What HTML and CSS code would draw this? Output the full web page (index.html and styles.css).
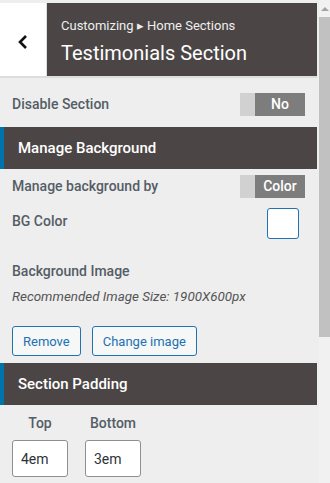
FILE: index.html
```html
<!DOCTYPE html>
<html lang="en">
  <head>
    <meta charset="UTF-8" />
    <meta name="viewport" content="width=device-width, initial-scale=1.0" />
    <title>Testimonials Section</title>
    <link rel="stylesheet" href="styles.css">
  </head>
  <body>
    <div class="layout">
      <div class="panel">
        <div class="head">
          <button class="back">
            <svg width="12" height="16" viewBox="0 0 12 16"><path d="M9 2 L3 8 L9 14" fill="none" stroke="#111" stroke-width="2.6"/></svg>
          </button>
          <div class="title">
            <span class="crumb">Customizing &#9656; Home Sections</span>
            <span class="name">Testimonials Section</span>
          </div>
        </div>

        <div class="row first">
          <span class="label">Disable Section</span>
          <span class="toggle"><i></i><b>No</b></span>
        </div>

        <div class="section">Manage Background</div>

        <div class="row tight">
          <span class="label">Manage background by</span>
          <span class="toggle"><i></i><b>Color</b></span>
        </div>
        <div class="row swatch-row">
          <span class="label">BG Color</span>
          <span class="swatch"></span>
        </div>

        <div class="image">
          <span class="label">Background Image</span>
          <em class="hint">Recommended Image Size: 1900X600px</em>
          <div class="actions">
            <button class="btn">Remove</button>
            <button class="btn">Change image</button>
          </div>
        </div>

        <div class="section">Section Padding</div>

        <div class="paddings">
          <div class="pad">
            <span class="label">Top</span>
            <input type="text" value="4em" />
          </div>
          <div class="pad">
            <span class="label">Bottom</span>
            <input type="text" value="3em" />
          </div>
        </div>
      </div>
      <div class="scrollbar">
        <div class="arrow"></div>
        <div class="thumb"></div>
      </div>
    </div>
  </body>
</html>
```

FILE: styles.css
```css
body {
  margin: 0;
  background-color: #eeeeee;
  font-family: Roboto, "Liberation Sans", sans-serif;
  color: #555d66;
}
.layout {
  display: flex;
  height: 483px;
  overflow: hidden;
}
.panel {
  width: 317px;
  flex-shrink: 0;
}
.head {
  display: flex;
  height: 73px;
  border-top: 3px solid #eeeeee;
  border-bottom: 2px solid #dddddd;
  background-color: #fff;
}
.back {
  width: 47px;
  border: none;
  border-right: 1px solid #dddddd;
  background-color: #fff;
  padding: 4px 0 0;
  display: flex;
  align-items: center;
  justify-content: center;
}
.title {
  flex: 1;
  background-color: #4b4645;
  color: #fff;
  padding: 13px 14px 0;
  display: flex;
  flex-direction: column;
}
.crumb {
  font-size: 13px;
  color: #eeeeee;
  line-height: 20px;
}
.name {
  font-size: 20px;
  line-height: 34px;
}
.label {
  font-size: 14px;
  font-weight: 500;
}
.row {
  display: flex;
  align-items: center;
  justify-content: space-between;
  padding: 0 12px;
}
.row.first {
  height: 26px;
  margin: 13px 0 10px;
}
.row.tight {
  height: 24px;
  margin: 5px 0 0;
}
.toggle {
  display: flex;
  width: 65px;
  height: 23px;
}
.toggle i {
  width: 15px;
  background-color: #d1d1d1;
}
.toggle b {
  flex: 1;
  background-color: #7d7d7d;
  color: #fff;
  font-size: 14px;
  font-weight: 500;
  text-align: center;
  line-height: 23px;
}
.swatch-row {
  height: 32px;
  margin-top: 10px;
  padding-right: 18px;
  align-items: flex-start;
}
.swatch-row .label {
  line-height: 26px;
}
.swatch {
  width: 30px;
  height: 29px;
  border: 1px solid #2271b1;
  border-radius: 3px;
  background-color: #fff;
}
.section {
  height: 42px;
  line-height: 42px;
  background-color: #4b4645;
  border-left: 4px solid #0073aa;
  color: #fff;
  font-size: 15px;
  font-weight: 500;
  padding-left: 14px;
}
.image {
  padding: 23px 12px 7px;
  display: flex;
  flex-direction: column;
}
.hint {
  font-size: 13.4px;
  margin-top: 10px;
  color: #555;
}
.actions {
  display: flex;
  gap: 11px;
  margin-top: 22px;
}
.btn {
  height: 30px;
  padding: 0 10px;
  border: 1px solid #2271b1;
  border-radius: 3px;
  background-color: #f6f7f7;
  color: #2271b1;
  font-family: Roboto, "Liberation Sans", sans-serif;
  font-size: 13px;
}
.paddings {
  display: flex;
  gap: 17px;
  padding: 10px 12px 0;
}
.pad {
  display: flex;
  flex-direction: column;
  align-items: center;
  gap: 9px;
}
.pad input {
  width: 56px;
  height: 37px;
  box-sizing: border-box;
  border: 1px solid #8c8f94;
  border-radius: 3px;
  padding: 0 8px;
  font-family: Roboto, "Liberation Sans", sans-serif;
  font-size: 14px;
  color: #2c3338;
}
.scrollbar {
  width: 11px;
  margin-left: 2px;
  background-color: #f1f1f1;
  display: flex;
  flex-direction: column;
}
.arrow {
  height: 17px;
  display: flex;
  justify-content: center;
  align-items: center;
}
.arrow::before {
  content: "";
  border: 4px solid transparent;
  border-bottom: 4px solid #a3a3a3;
  border-top: none;
}
.thumb {
  height: 320px;
  background-color: #c1c1c1;
}
```
